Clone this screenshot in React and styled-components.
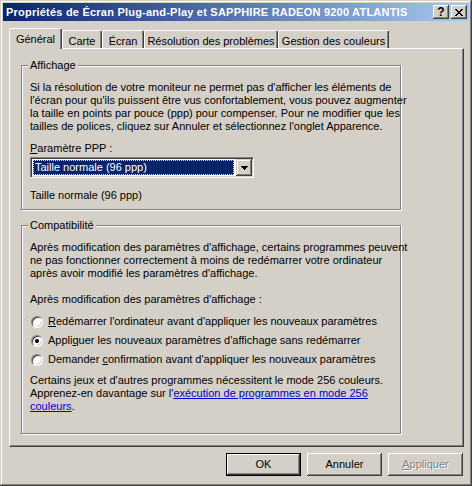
import React from 'react';
import styled, { createGlobalStyle } from 'styled-components';

const FACE = '#d4d0c8';

const GlobalStyle = createGlobalStyle`
  html, body {
    margin: 0;
    padding: 0;
    background: ${FACE};
  }
  body {
    font-family: 'Liberation Sans', Arial, sans-serif;
    font-size: 11px;
    line-height: 13px;
    color: #000;
  }
`;

const Window = styled.div`
  box-sizing: border-box;
  width: 472px;
  height: 486px;
  padding: 3px;
  display: flex;
  flex-direction: column;
  background: ${FACE};
  box-shadow: inset -1px -1px #404040, inset 1px 1px ${FACE},
    inset -2px -2px #808080, inset 2px 2px #fff;
`;

const TitleBar = styled.div`
  height: 18px;
  flex: none;
  display: flex;
  align-items: center;
  padding: 0 2px 0 3px;
  background: linear-gradient(to right, #0a246a, #a6caf0);
  color: #fff;
`;

const Title = styled.span`
  flex: 1;
  font-weight: bold;
  letter-spacing: 0.22px;
  white-space: nowrap;
`;

const CaptionButton = styled.div`
  box-sizing: border-box;
  width: 16px;
  height: 14px;
  margin-left: ${p => p.$gap || 0}px;
  display: flex;
  align-items: center;
  justify-content: center;
  background: ${FACE};
  color: #000;
  font-weight: bold;
  font-size: 12px;
  box-shadow: inset -1px -1px #404040, inset 1px 1px #fff,
    inset -2px -2px #808080, inset 2px 2px ${FACE};
`;

const Body = styled.div`
  flex: 1;
  display: flex;
  flex-direction: column;
  padding: 7px 5px 0 6px;
`;

const TabStrip = styled.div`
  height: 20px;
  display: flex;
  align-items: flex-end;
  position: relative;
  z-index: 1;
`;

const Tab = styled.div`
  box-sizing: border-box;
  width: ${p => p.$w}px;
  height: ${p => (p.$selected ? 21 : 18)}px;
  margin-bottom: ${p => (p.$selected ? -1 : 0)}px;
  padding-top: 4px;
  display: flex;
  justify-content: center;
  white-space: nowrap;
  background: ${FACE};
  border-top: 1px solid #fff;
  border-left: 1px solid #fff;
  border-right: 1px solid #404040;
  border-radius: 2px 2px 0 0;
  box-shadow: inset -1px 0 #808080;
`;

const Panel = styled.div`
  box-sizing: border-box;
  height: 399px;
  padding: 10px 11px 0;
  border: 1px solid;
  border-color: #fff #404040 #404040 #fff;
  box-shadow: inset -1px -1px #808080;
`;

const Group = styled.fieldset`
  box-sizing: border-box;
  width: 380px;
  min-width: 0;
  margin: ${p => p.$top || 0}px 0 0;
  padding: 9px 8px ${p => p.$bottom}px;
  border: 1px solid #808080;
  box-shadow: 1px 1px 0 #fff, inset 1px 1px 0 #fff;
`;

const Legend = styled.legend`
  padding: 0 2px;
  margin-left: -2px;
  background: ${FACE};
`;

const Para = styled.p`
  margin: ${p => p.$top || 0}px 0 0;
  white-space: nowrap;
`;

const Key = styled.span`
  text-decoration: underline;
`;

const Link = styled.span`
  color: #0000cc;
  text-decoration: underline;
`;

const Combo = styled.div`
  box-sizing: border-box;
  width: 224px;
  height: 21px;
  margin-top: 2px;
  padding: 1px;
  display: flex;
  background: #fff;
  border: 1px solid;
  border-color: #808080 #fff #fff #808080;
  box-shadow: inset 1px 1px #404040, inset -1px -1px ${FACE};
`;

const ComboValue = styled.div`
  flex: 1;
  margin: 1px 2px 1px 1px;
  padding-left: 2px;
  background: #0a246a;
  color: #fff;
  outline: 1px dotted #e8e0a0;
  outline-offset: -1px;
  line-height: 15px;
  white-space: nowrap;
`;

const DropButton = styled.div`
  box-sizing: border-box;
  width: 16px;
  height: 17px;
  display: flex;
  align-items: center;
  justify-content: center;
  background: ${FACE};
  box-shadow: inset -1px -1px #404040, inset 1px 1px ${FACE},
    inset -2px -2px #808080, inset 2px 2px #fff;
`;

const RadioRow = styled.div`
  display: flex;
  align-items: center;
  gap: 5px;
  height: 13px;
  margin-top: ${p => p.$top}px;
  padding-left: 1px;
  white-space: nowrap;
`;

const RadioCircle = styled.span`
  position: relative;
  flex: none;
  box-sizing: border-box;
  width: 12px;
  height: 12px;
  border-radius: 50%;
  background: #fff;
  border: 1px solid;
  border-color: #808080 #fff #fff #808080;
  box-shadow: inset 1px 1px #404040, inset -1px -1px ${FACE};

  &::after {
    content: '';
    display: ${p => (p.$checked ? 'block' : 'none')};
    position: absolute;
    left: 3px;
    top: 3px;
    width: 4px;
    height: 4px;
    border-radius: 50%;
    background: #000;
  }
`;

const ButtonRow = styled.div`
  display: flex;
  justify-content: flex-end;
  gap: 6px;
  margin-top: 6px;
  padding-right: 1px;
`;

const Button = styled.div`
  box-sizing: border-box;
  width: 75px;
  height: 23px;
  display: flex;
  align-items: center;
  justify-content: center;
  background: ${FACE};
  color: ${p => (p.$disabled ? '#808080' : '#000')};
  text-shadow: ${p => (p.$disabled ? '1px 1px 0 #fff' : 'none')};
  box-shadow: ${p =>
    p.$default
      ? 'inset 0 0 0 1px #000, inset -2px -2px #404040, inset 2px 2px #fff, inset -3px -3px #808080'
      : `inset -1px -1px #404040, inset 1px 1px #fff, inset -2px -2px #808080, inset 2px 2px ${FACE}`};
`;

const X_PIXELS = [
  [0, 0, 2], [6, 0, 2],
  [1, 1, 2], [5, 1, 2],
  [2, 2, 4],
  [3, 3, 2],
  [2, 4, 4],
  [1, 5, 2], [5, 5, 2],
  [0, 6, 2], [6, 6, 2],
];

const CloseIcon = () => (
  <svg width="8" height="7" viewBox="0 0 8 7" shapeRendering="crispEdges">
    {X_PIXELS.map(([x, y, w], i) => (
      <rect key={i} x={x} y={y} width={w} height="1" fill="#000" />
    ))}
  </svg>
);

const ArrowDown = () => (
  <svg width="7" height="4" viewBox="0 0 7 4" shapeRendering="crispEdges">
    <rect x="0" y="0" width="7" height="1" fill="#000" />
    <rect x="1" y="1" width="5" height="1" fill="#000" />
    <rect x="2" y="2" width="3" height="1" fill="#000" />
    <rect x="3" y="3" width="1" height="1" fill="#000" />
  </svg>
);

const tabs = [
  { label: 'Général', w: 53, selected: true },
  { label: 'Carte', w: 40 },
  { label: 'Écran', w: 42 },
  { label: 'Résolution des problèmes', w: 134 },
  { label: 'Gestion des couleurs', w: 111 },
];

export default function App() {
  return (
    <>
      <GlobalStyle />
      <Window>
        <TitleBar>
          <Title>Propriétés de Écran Plug-and-Play et SAPPHIRE RADEON 9200 ATLANTIS</Title>
          <CaptionButton>?</CaptionButton>
          <CaptionButton $gap={2}>
            <CloseIcon />
          </CaptionButton>
        </TitleBar>

        <Body>
          <TabStrip>
            {tabs.map(t => (
              <Tab key={t.label} $w={t.w} $selected={t.selected}>
                {t.label}
              </Tab>
            ))}
          </TabStrip>

          <Panel>
            <Group $bottom={7}>
              <Legend>Affichage</Legend>
              <Para>
                Si la résolution de votre moniteur ne permet pas d'afficher les éléments de
                <br />
                l'écran pour qu'ils puissent être vus confortablement, vous pouvez augmenter
                <br />
                la taille en points par pouce (ppp) pour compenser. Pour ne modifier que les
                <br />
                tailles de polices, cliquez sur Annuler et sélectionnez l'onglet Apparence.
              </Para>
              <Para $top={9}>
                <Key>P</Key>aramètre PPP :
              </Para>
              <Combo>
                <ComboValue>Taille normale (96 ppp)</ComboValue>
                <DropButton>
                  <ArrowDown />
                </DropButton>
              </Combo>
              <Para $top={11}>Taille normale (96 ppp)</Para>
            </Group>

            <Group $top={9} $bottom={20}>
              <Legend>Compatibilité</Legend>
              <Para>
                Après modification des paramètres d'affichage, certains programmes peuvent
                <br />
                ne pas fonctionner correctement à moins de redémarrer votre ordinateur
                <br />
                après avoir modifié les paramètres d'affichage.
              </Para>
              <Para $top={13}>Après modification des paramètres d'affichage :</Para>
              <RadioRow $top={9}>
                <RadioCircle />
                <span>
                  <Key>R</Key>edémarrer l'ordinateur avant d'appliquer les nouveaux paramètres
                </span>
              </RadioRow>
              <RadioRow $top={6}>
                <RadioCircle $checked />
                <span>
                  Appli<Key>q</Key>uer les nouveaux paramètres d'affichage sans redémarrer
                </span>
              </RadioRow>
              <RadioRow $top={6}>
                <RadioCircle />
                <span>
                  Demander <Key>c</Key>onfirmation avant d'appliquer les nouveaux paramètres
                </span>
              </RadioRow>
              <Para $top={8}>
                Certains jeux et d'autres programmes nécessitent le mode 256 couleurs.
                <br />
                Apprenez-en davantage sur l'<Link>exécution de programmes en mode 256</Link>
                <br />
                <Link>couleurs</Link>.
              </Para>
            </Group>
          </Panel>

          <ButtonRow>
            <Button $default>OK</Button>
            <Button>Annuler</Button>
            <Button $disabled>
              <span>
                <Key>A</Key>ppliquer
              </span>
            </Button>
          </ButtonRow>
        </Body>
      </Window>
    </>
  );
}
